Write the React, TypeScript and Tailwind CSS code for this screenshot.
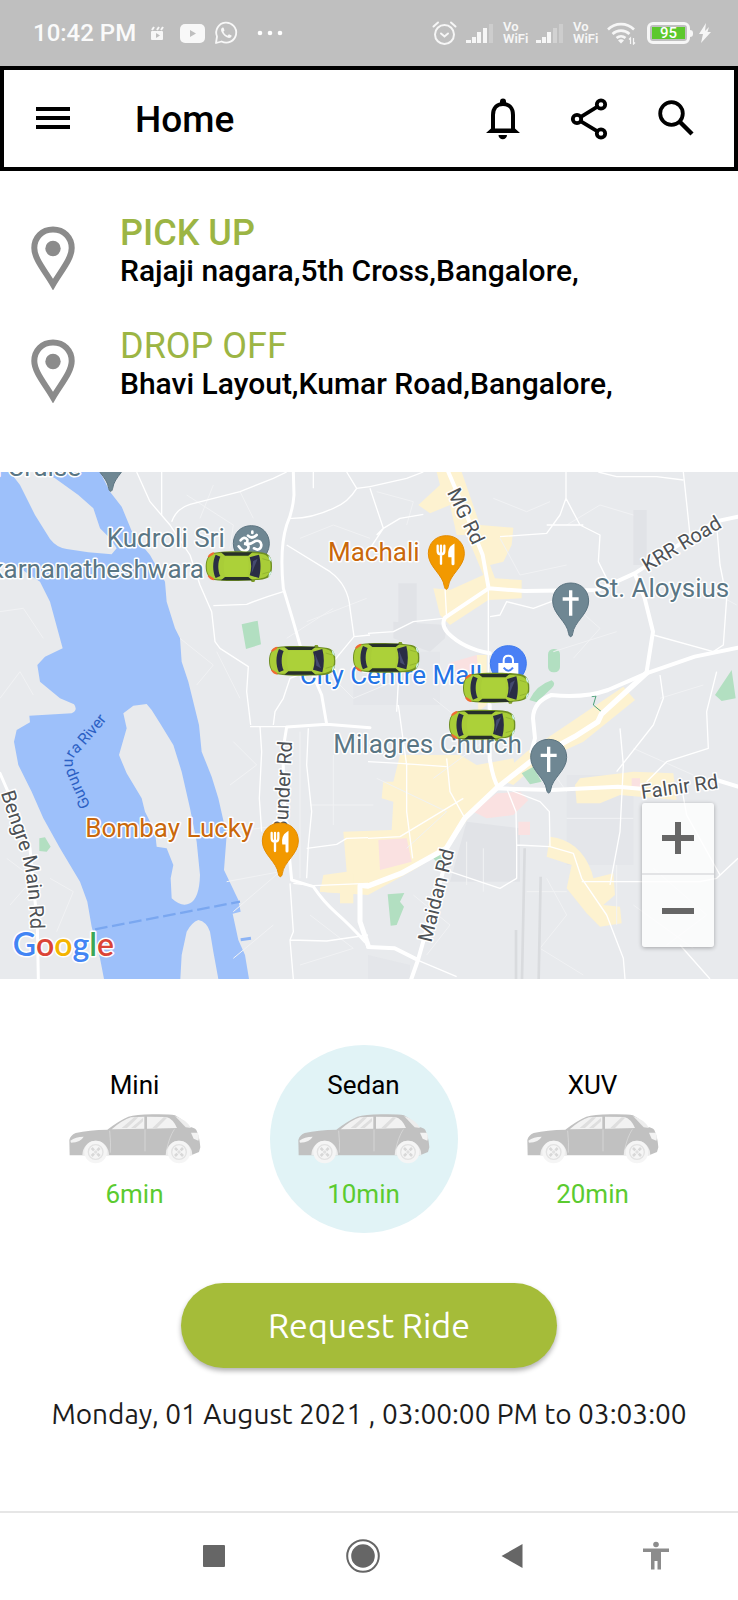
import { useState } from "react";
import type { ReactNode } from "react";

const ROBOTO = "font-['Roboto','Liberation_Sans',sans-serif]";

function SignalIcon({ dim }: { dim: number }) {
  return (
    <svg width="28" height="22" viewBox="0 0 28 22" fill="#f6f6f6" aria-hidden="true">
      <rect x="0" y="18" width="5" height="3" />
      <rect x="6" y="15" width="4" height="6" />
      <rect x="11" y="10" width="4" height="11" />
      <rect x="17" y="6" width="4" height="15" fillOpacity={dim > 1 ? 0.35 : 1} />
      <rect x="23" y="2" width="4" height="19" fillOpacity="0.25" />
    </svg>
  );
}

function VoWifi() {
  return (
    <span className="flex w-[26px] flex-col text-[13px] leading-[12px] font-semibold text-[#f6f6f6]">
      <span>Vo</span>
      <span>WiFi</span>
    </span>
  );
}

function StatusBar() {
  return (
    <div className="flex h-[66px] items-center justify-between bg-[#bfbfbf] pr-[26px] pl-[33px] text-white">
      <div className="flex items-center">
        <span className="w-[118px] text-[24px] leading-[28px] font-medium text-[#fafafa]">10:42 PM</span>
        <svg width="13" height="14" viewBox="0 0 13 14" aria-hidden="true">
          <path d="M1 4L3 1M6 4L8 1M10 4L12 1" stroke="#f7f7f7" strokeWidth="2" />
          <rect x="0" y="5" width="12" height="9" rx="1" fill="#f7f7f7" />
          <path d="M5 7L9 9.500L5 12Z" fill="#bfbfbf" />
        </svg>
        <svg className="ml-4" width="25" height="19" viewBox="0 0 25 19" aria-hidden="true">
          <rect width="25" height="19" rx="5" fill="#f8f8f8" />
          <path d="M10 6L16 9.500L10 13Z" fill="#bfbfbf" />
        </svg>
        <svg className="ml-[9px]" width="24" height="24" viewBox="0 0 24 24" aria-hidden="true">
          <path d="M2 22L3 15.500A10 10 0 1 1 7.600 20.500Z" fill="none" stroke="#f8f8f8" strokeWidth="1.800" strokeLinejoin="round" />
          <path d="M8.500 6.500C7 7.200 6.700 9 7.500 10.700C9 14 12 16.400 15 17C16.500 17 17.700 16 17.600 14.600L14.900 13.200L13.600 14.700C11.600 13.900 10.200 12.500 9.400 10.700L10.500 9.400L9.600 6.800Z" fill="#f8f8f8" />
        </svg>
        <svg className="ml-[19px]" width="26" height="6" viewBox="0 0 26 6" fill="#fff" aria-hidden="true">
          <circle cx="3" cy="3" r="2.300" />
          <circle cx="13" cy="3" r="2.300" />
          <circle cx="23" cy="3" r="2.300" />
        </svg>
      </div>
      <div className="flex items-center">
        <svg width="25" height="24" viewBox="0 0 25 24" fill="none" stroke="#f6f6f6" strokeWidth="2" strokeLinecap="round" aria-hidden="true">
          <circle cx="12.500" cy="13.500" r="9.500" />
          <path d="M1.500 5.500L6 1.500M23.500 5.500L19 1.500M9 12.500L12.500 15.500L16 12.500" />
        </svg>
        <span className="ml-[9px]"><SignalIcon dim={1} /></span>
        <span className="ml-[9px]"><VoWifi /></span>
        <span className="ml-[7px]"><SignalIcon dim={2} /></span>
        <span className="ml-[9px]"><VoWifi /></span>
        <svg className="ml-[8px]" width="30" height="24" viewBox="0 0 30 24" fill="none" stroke="#f6f6f6" strokeWidth="2.600" aria-hidden="true">
          <path d="M1 8.500A18.500 18.500 0 0 1 27 8.500M5.500 13A12.500 12.500 0 0 1 22.500 13M9.500 17A7 7 0 0 1 18.500 17" />
          <path d="M11 19.500A4 4 0 0 1 17 19.500L14 22.500Z" fill="#f6f6f6" stroke="none" />
          <path d="M23.500 23V17L22 18.500M26.500 17V23L28 21.500" strokeWidth="1.200" />
        </svg>
        <span className="ml-[10px] flex h-[22px] w-[43px] items-center justify-center rounded-[6px] border-[3px] border-[#f6f6f6] p-[2px]">
          <span className="flex h-[12px] w-full items-center justify-center bg-[#5cc82c] text-[15px] leading-[14px] font-medium text-white">95</span>
        </span>
        <span className="h-[7px] w-[3px] rounded-r-sm bg-[#f6f6f6]" />
        <svg className="ml-[5px]" width="14" height="22" viewBox="0 0 14 22" fill="#f6f6f6" aria-hidden="true">
          <path d="M8 1L1 12H5L3 21L13 10H9.500L11 5L7 9Z" />
        </svg>
      </div>
    </div>
  );
}

function Header() {
  return (
    <header className="flex h-[105px] items-center border-4 border-black bg-white px-8 text-black">
      <button type="button" aria-label="Open menu" className="shrink-0">
        <svg width="34" height="24" viewBox="0 0 34 24" fill="#000">
          <rect y="0" width="34" height="4" />
          <rect y="9" width="34" height="4" />
          <rect y="18" width="34" height="4" />
        </svg>
      </button>
      <h1 className="ml-[65px] flex-1 pt-[2px] text-[37px] leading-[44px] font-medium">Home</h1>
      <div className="flex items-center gap-[50px]">
        <button type="button" aria-label="Notifications">
          <svg width="34" height="42" viewBox="0 0 34 42">
            <path d="M7 32V17C7 10 11 6 17 6S27 10 27 17V32" fill="none" stroke="#000" strokeWidth="4" />
            <path d="M14 6V3.500A3 3 0 0 1 20 3.500V6ZM0 35L5 30.500H29L34 35ZM12.500 37H21A4.200 4.200 0 0 1 12.500 37Z" />
          </svg>
        </button>
        <button type="button" aria-label="Share">
          <svg width="38" height="42" viewBox="0 0 38 42" fill="none" stroke="#000" strokeWidth="3.800">
            <circle cx="7" cy="21" r="4.200" />
            <circle cx="31" cy="6.500" r="4.200" />
            <circle cx="31" cy="35.500" r="4.200" />
            <path d="M10.500 19L27.500 8.700M10.500 23L27.500 33.300" />
          </svg>
        </button>
        <button type="button" aria-label="Search" className="mr-[8px]">
          <svg width="36" height="40" viewBox="0 0 36 40" fill="none" stroke="#000" strokeWidth="3.800">
            <circle cx="13.500" cy="14.500" r="11.300" />
            <path d="M22 23L34 35" strokeWidth="4.400" />
          </svg>
        </button>
      </div>
    </header>
  );
}

function PlaceRow({ title, address, strong }: { title: string; address: string; strong?: boolean }) {
  return (
    <div className="flex h-[72px] items-start">
      <svg className="mt-[11px] shrink-0" width="44" height="64" viewBox="0 0 44 64" aria-hidden="true">
        <path d="M22 3.500C11 3.500 3.300 11.500 3.300 22C3.300 33 14.500 45.500 22 58.500C29.500 45.500 40.700 33 40.700 22C40.700 11.500 33 3.500 22 3.500Z" fill="none" stroke="#8b8b8b" strokeWidth="6" />
        <circle cx="22" cy="22.500" r="7.700" fill="#8b8b8b" />
      </svg>
      <div className="ml-[45px] flex flex-col">
        <h2 className={strong ? "text-[36px] leading-[36px] font-medium text-[#9cb544]" : "text-[36px] leading-[36px] font-normal text-[#9cb544]"}>{title}</h2>
        <p className="text-[30px] leading-[40px] font-medium text-black">{address}</p>
      </div>
    </div>
  );
}

function CabMarker({ x, y, flip }: { x: number; y: number; flip?: boolean }) {
  return (
    <g transform={`translate(${x} ${flip ? y + 94 : y}) scale(1 ${flip ? -1 : 1})`}>
      <path d="M134 8L138 0H146L150 8Z" fill="#7d9c2a" />
      <path d="M26 6C10 10 0 24 0 47S10 84 26 88C60 94 110 93 150 91C172 90 184 86 190 80C198 70 199 60 199 47S198 26 190 16C184 10 172 7 150 6C110 3 60 1 26 6Z" fill="#6f8f22" />
      <path d="M24 9C10 14 3 26 3 47S10 80 24 85C60 89 120 88 150 86C170 85 180 82 186 76C193 68 195 60 195 47S193 28 186 20C180 13 170 11 150 9C120 7 60 6 24 9Z" fill="#a9cd38" />
      <path d="M6 18C10 10 18 5 26 5L24 11L10 20ZM6 76C10 84 18 89 26 89L24 83L10 74Z" fill="#f06a32" />
      <path d="M188 14C195 20 198 28 197 34L190 26ZM188 80C195 74 198 66 197 60L190 68Z" fill="#c9efe8" />
      <path d="M46 5H140L128 15H58ZM46 89H140L128 79H58Z" fill="#27302a" />
      <path d="M30 12L44 18C36 34 36 60 44 76L30 82C20 62 20 32 30 12Z" fill="#2a2d45" />
      <path d="M132 20L160 12C166 34 166 60 160 82L132 74C138 56 138 38 132 20Z" fill="#2a2d45" />
      <path d="M138 26L156 70L142 62Z" fill="#454b70" />
      <path d="M58 18Q50 47 58 76H126Q132 47 126 18Z" fill="#acd139" />
      <path d="M170 24L190 30M170 70L190 64" stroke="#88a92c" strokeWidth="2" />
    </g>
  );
}

function MapPin({ x, y, fill, edge, children }: { x: number; y: number; fill: string; edge: string; children?: ReactNode }) {
  return (
    <g transform={`translate(${x} ${y})`}>
      <path d="M0 -106C-33 -106 -54 -82 -54 -52C-54 -12 -10 10 -6 46C-4 58 4 58 6 46C10 10 54 -12 54 -52C54 -82 33 -106 0 -106Z" fill={fill} stroke={edge} strokeWidth="3" />
      {children}
    </g>
  );
}

function Cutlery() {
  return (
    <g fill="none" stroke="#fff" strokeLinecap="round">
      <path d="M-26 -76V-60Q-26 -50 -16 -50Q-6 -50 -6 -60V-76M-16 -76V-22" strokeWidth="7" />
      <path d="M20 -22V-74Q8 -66 10 -46H18" strokeWidth="9" fill="#fff" />
    </g>
  );
}

function CrossGlyph() {
  return <path d="M0 -84V-8M-24 -58H24" fill="none" stroke="#fff" strokeWidth="10" />;
}

const HALO = { paintOrder: "stroke", stroke: "#fff", strokeWidth: 9, strokeLinejoin: "round" } as const;

function CityMap() {
  return (
    <svg className={`block h-auto w-full ${ROBOTO}`} viewBox="0 21 2214 1521" role="img" aria-label="Map of nearby cabs">
      <defs>
        <path id="river" d="M272 1022Q236 950 220 905Q212 880 240 858Q275 820 330 752" />
        <path id="bengre" d="M2 984Q40 1100 62 1160Q88 1240 92 1420" />
      </defs>
      <rect y="21" width="2214" height="1521" fill="#e8eaed" />
      <g fill="#e1e3e7">
        <path d="M1180 470L1340 480L1335 520L1290 560L1180 520ZM1195 355H1250V475H1195ZM1900 135H1940V300H1900ZM1400 1070L1560 1090V1250H1350Z" />
        <path d="M1104 1470L1230 1500V1541H1104ZM1060 560H1320V720H1060ZM1700 930H1900V1200H1700Z" opacity=".6" />
      </g>
      <path d="M0 21H300L330 80L365 125L400 210L450 270L495 350L500 410L525 490L540 520L545 590L565 650L597 780L605 860L635 935L655 1000L680 1110L672 1215L715 1305L722 1340L698 1346L715 1425L735 1470L747 1542H312L300 1480L275 1385L262 1310L240 1250L180 1150L130 1060L95 980L55 900L42 830L50 795L90 772L88 752L215 745Q235 735 222 718L180 700L120 650L112 600L135 575L188 550L150 410L120 350L60 310L0 290Z" fill="#9dc0fa" />
      <g fill="#e8eaed">
        <path d="M30 21L60 60L105 150L150 222Q170 248 200 252L265 262L335 268L350 250L330 220L300 190L280 130L235 90L165 40L130 21Z" />
        <path d="M370 745L400 722L440 717L455 735L480 775L520 840L545 920L570 1030L590 1130L600 1230Q598 1300 570 1315Q545 1328 515 1300L512 1240L520 1200L500 1150L470 1145L465 1100L435 1040L425 1000L380 925L357 870L380 790Z" />
        <path d="M541 1542L545 1470L560 1400Q575 1372 595 1365Q620 1370 630 1400L640 1460L655 1542Z" />
      </g>
      <path d="M285 1393L720 1310" stroke="#7aa7f0" strokeWidth="7" strokeDasharray="38 14" />
      <path d="M722 1424L753 1420" stroke="#8db4f5" strokeWidth="9" />

      <g fill="#fdf2d0">
        <path d="M1310 21H1385L1440 180L1540 188L1535 240L1510 290L1470 300L1485 340L1565 345V400L1465 405L1350 480L1320 450L1300 370L1350 375L1450 330L1400 210L1370 210L1350 120L1290 145L1255 120L1320 60Z" />
        <path d="M1430 570L1460 570V720L1435 740Z" />
        <path d="M1870 665L1905 705L1750 830L1620 890L1540 960L1490 940L1580 860L1700 780Z" />
        <path d="M1200 870H1380L1430 900L1540 880L1550 930L1440 1010L1340 1150L1250 1210L1104 1290L960 1280L970 1230L1040 1220L1030 1100L1175 1095L1180 1010L1145 1000L1150 950L1180 950Z" />
        <path d="M960 1265L1060 1225V1315H1020V1285L960 1280Z" />
        <path d="M1725 960L1740 940L1900 920L2020 925L2030 1005L1860 990L1800 1015L1730 1015Z" />
        <path d="M1650 1115Q1740 1125 1775 1220L1780 1240L1840 1225L1845 1290L1810 1320L1860 1325L1865 1375L1800 1385L1760 1345L1700 1270L1715 1200L1640 1175Z" />
      </g>
      <g fill="#fae1e1">
        <path d="M1420 1040L1490 985L1560 980L1585 1005L1540 1050L1460 1060ZM1555 1070H1590V1110H1555ZM1135 1125L1220 1120L1235 1190L1140 1215ZM1345 595L1430 570L1435 620H1360ZM1895 940H1920V965H1895Z" />
      </g>
      <g fill="#b2dfc1">
        <path d="M725 478L773 467L783 538L738 552ZM118 1120L135 1117L152 1145L140 1160L118 1158Z" />
        <rect x="1644" y="552" width="36" height="70" rx="16" />
        <path d="M1588 705Q1610 660 1655 646Q1670 655 1655 670L1610 712ZM2145 690L2195 615L2207 700L2165 708ZM1565 925L1600 905L1625 950L1590 958ZM1163 1288L1213 1284L1200 1310L1212 1325L1190 1380L1172 1382ZM1290 1170L1330 1155L1325 1205Z" />
      </g>
      <path d="M1775 695L1788 693L1780 720L1804 740" fill="none" stroke="#4ba279" strokeWidth="3" />

      <g fill="none" stroke="#f1f2f4" strokeWidth="3">
        <path d="M560 90L700 180L690 250M640 60L600 160M720 80L760 160M540 520L640 600L590 660M650 560L720 700M900 220L1000 180L1110 220M920 470L1100 400M860 520L1000 430M980 620L1060 700L1180 650M0 440L70 430L130 520M0 700L60 620L100 690M700 830L770 900L690 960M700 1100L850 1080M680 1250L840 1220L700 1340M820 1380L700 1480M900 800V1240M1000 870V1080M20 1180L100 1240L30 1320M150 1240L220 1280L170 1400M930 1020H1120M930 1350L1060 1450L900 1500" />
        <path d="M1130 80L1240 110L1220 180M1480 100L1580 140L1650 110M1700 180L1800 120L1900 150M1500 220L1560 330L1700 300M1720 420L1800 490L1720 580M1660 560L1850 500M1980 380L2100 360L2210 420M1980 700L2110 660M1300 700L1400 780M1450 830L1300 940M1130 940L1340 1040L1220 1150M1600 840L1700 980M1900 850L2080 930M1400 1130V1260M1450 1150V1280M1640 1240L1700 1350L1620 1450L1750 1530M1580 1280H1700M1850 1200V1380M1900 1320L2080 1450M1960 1210L2120 1350L2000 1440M1240 1290L1350 1380L1280 1470M1700 1060H1900" />
      </g>
      <g fill="none" stroke="#fff" strokeWidth="4" strokeLinejoin="round">
        <path d="M410 21L450 110L510 180L570 270L600 360L635 440L645 530L660 550L745 605L740 680L752 780M485 21V150M515 170Q530 130 570 118L720 80L820 40L860 21M870 160Q930 162 1000 130Q1045 112 1070 70L1110 65M940 21V70M850 380Q790 398 740 418L640 422M1070 70L1040 21M860 240L990 320Q1045 360 1050 430L1062 515L1110 510M1062 515L1000 590L870 640L850 700L825 740L820 780M780 785L785 860L778 1000L785 1100M925 790L920 900L935 1040L925 1140L920 1240M750 785H860M920 1150L1010 1138L1040 1120L1104 1118M870 1255L880 1400L870 1425L880 1542M870 1425L980 1428L1104 1410M880 1255L940 1262L1104 1255" />
        <path d="M1110 65L1220 40L1270 21M1110 70L1150 190L1130 210M1110 250L1150 190L1200 160L1270 148M1698 21V100L1680 150L1640 205L1500 215M1698 100L1740 180L1800 210L1795 290L1820 340M1640 180H1750M1795 21L1850 35H1970L2050 45M2050 21L2070 210M2150 180L2160 300L2180 400L2170 540L2140 560L1960 510M1335 370L1340 460M1465 375V720M1330 460L1240 470L1180 500L1104 505M1470 455L1500 450L1520 410L1600 430L1680 400M1980 630L1990 700L1960 780L1850 920M2150 620L2120 740L2125 850L2000 890L1940 950M1860 790L1870 900L1860 1100L1830 1260M1195 720L1210 830L1220 900V1040L1238 1180M1190 740L1195 650M1340 880L1350 980L1395 1060M1520 970L1548 1040L1550 1140L1650 1145L1648 1040L1620 1010L1530 975M1550 1140V1240L1500 1270L1350 1220M1650 1145L1720 1165L1745 1240L1820 1350L1870 1480L1875 1542M1745 1250H2100L2150 1240L2214 1180M2040 940L2060 1050L2160 1230M2040 1440L2130 1542M1104 890L1200 895L1340 905M1240 1480L1370 1535M1104 1120L1200 1115L1390 1000" />
      </g>
      <g fill="none" stroke="#fff" strokeWidth="12" strokeLinejoin="round" strokeLinecap="round">
        <path d="M880 21L882 90Q878 140 860 180Q838 250 850 370L880 470L900 540L965 690L980 778L860 786L848 860L855 1040L875 1245L940 1265Q970 1310 1010 1345T1095 1430M980 778L1110 788M0 925L50 1040L90 1150L112 1380L115 1542" strokeWidth="9" />
        <path d="M1080 1262V1370L1104 1440" strokeWidth="15" />
        <path d="M1345 21L1400 150L1448 270L1466 370L1335 458Q1322 480 1345 505Q1390 550 1469 565M1466 370L1574 378L1794 375L1904 325L2144 170L2214 155M1904 325L1934 400L1959 500L1940 620M2214 548L2084 575L1939 625L1824 675Q1754 700 1654 690Q1600 710 1599 760L1605 820L1594 860M1469 720V880Q1478 940 1495 968M1489 970L1654 975L1854 965L1930 972M2140 942L2214 965M1104 1446L1184 1450L1254 1485M1339 1150L1329 1220L1254 1485L1234 1542" />
        <path d="M1939 625L1804 748L1794 770L1724 815L1604 880L1489 970L1394 1060L1339 1150L1204 1225L1104 1263L1090 1262" strokeWidth="16" />
      </g>
      <path d="M1574 1150L1566 1542M1622 1235L1616 1542M1548 1395V1542" stroke="#d9dbde" strokeWidth="8" />

      <g fontSize="60" fill="#4d5155" style={{ ...HALO }}>
        <text transform="translate(1340 82) rotate(64)">MG Rd</text>
        <text transform="translate(1942 322) rotate(-31)">KRR Road</text>
        <text transform="translate(1926 1002) rotate(-8)">Falnir Rd</text>
        <text transform="translate(1294 1434) rotate(-76)">Maidan Rd</text>
        <text transform="translate(862 1104) rotate(-87)">Bunder Rd</text>
        <text><textPath href="#bengre">Bengre Main Rd</textPath></text>
      </g>
      <text fontSize="47" fill="#2b5fc4"><textPath href="#river">Gurupura River</textPath></text>

      <MapPin x={332} y={24} fill="#6f8793" edge="#5b7380" />
      <MapPin x={754} y={288} fill="#6f8793" edge="#5b7380">
        <path d="M-32 -62Q-22 -76 -12 -64Q-10 -52 -22 -52Q-4 -50 -10 -36Q-24 -22 -38 -44M-14 -50Q2 -52 12 -60Q28 -64 30 -48Q30 -36 18 -34L8 -38M-10 -76Q2 -64 16 -78M3 -84V-88" fill="none" stroke="#fff" strokeWidth="8" strokeLinecap="round" />
      </MapPin>
      <MapPin x={1339} y={318} fill="#f29900" edge="#e48b00"><Cutlery /></MapPin>
      <MapPin x={841} y={1180} fill="#f29900" edge="#e48b00"><Cutlery /></MapPin>
      <MapPin x={1712} y={460} fill="#6f8793" edge="#5b7380"><CrossGlyph /></MapPin>
      <MapPin x={1646} y={929} fill="#6f8793" edge="#5b7380"><CrossGlyph /></MapPin>
      <MapPin x={1525} y={648} fill="#4a80f5" edge="#3b78ee">
        <path d="M-30 -54H30V-10H-30Z" fill="#fff" />
        <path d="M-14 -54V-62Q-14 -76 0 -76T14 -62V-54" fill="none" stroke="#fff" strokeWidth="6" />
        <path d="M-14 -40Q0 -22 14 -40" fill="none" stroke="#4a80f5" strokeWidth="6" />
      </MapPin>

      <g fontSize="78" style={{ ...HALO }}>
        <g fill="#5a7684">
          <text x="243" y="33" textAnchor="end">n Cruise</text>
          <text x="320" y="247">Kudroli Sri</text>
          <text x="612" y="340" textAnchor="end">karnanatheshwara</text>
          <text x="1783" y="395">St. Aloysius</text>
          <text x="1000" y="864">Milagres Church</text>
        </g>
        <text x="984" y="289" fill="#c9680c">Machali</text>
        <text x="256" y="1117" fill="#c9680c">Bombay Lucky</text>
        <text x="899" y="656" fill="#2474e5">City Centre Mall</text>
      </g>
      <text x="38" y="1474" fontSize="96" className="font-['Lato','Roboto',sans-serif] font-semibold" style={{ ...HALO }}>
        <tspan fill="#4285f4">G</tspan>
        <tspan fill="#db4437">o</tspan>
        <tspan fill="#f4b400">o</tspan>
        <tspan fill="#4285f4">g</tspan>
        <tspan fill="#3aa757">l</tspan>
        <tspan fill="#db4437">e</tspan>
      </text>

      <CabMarker x={617} y={257} flip />
      <CabMarker x={807} y={540} />
      <CabMarker x={1059} y={531} />
      <CabMarker x={1389} y={622} flip />
      <CabMarker x={1347} y={733} flip />
    </svg>
  );
}

function HatchbackDrawing() {
  return (
    <svg width="132" height="50" viewBox="0 0 396 150" aria-hidden="true">
      <path d="M2 125L1 78Q4 64 20 57Q60 48 115 47Q150 20 178 8Q200 2 250 1Q300 0 318 4Q350 22 360 39Q376 40 382 48Q392 70 394 100L390 114L366 124H2Z" fill="#c1c1c1" />
      <path d="M128 46Q160 18 186 10L226 8V44ZM234 8L292 9Q312 14 324 42L234 44Z" fill="#f2f2f2" />
      <path d="M158 42L196 10H208L174 42ZM186 42L222 12V22L200 42ZM250 42L284 10H296L264 42Z" fill="#dedede" />
      <path d="M318 6L350 40L366 42Q354 18 318 6Z" fill="#ededed" />
      <path d="M4 80Q20 68 44 68Q36 84 6 86ZM366 56L386 56Q392 66 388 80L374 74Z" fill="#f3f3f3" />
      <path d="M228 46V112M122 50Q126 90 124 116M316 46Q300 70 292 112" fill="none" stroke="#d8d8d8" strokeWidth="2.500" />
      {[80, 330].map((cx) => (
        <g key={cx}>
          <path d={`M${cx - 40} 124A40 44 0 0 1 ${cx + 40} 124Z`} fill="#ececec" />
          <circle cx={cx} cy="114" r="34" fill="#f5f5f5" />
          <circle cx={cx} cy="114" r="22" fill="none" stroke="#e2e2e2" strokeWidth="4" />
          <path d={`M${cx - 12} 102L${cx - 5} 109M${cx + 12} 102L${cx + 5} 109M${cx - 12} 126L${cx - 5} 119M${cx + 12} 126L${cx + 5} 119`} stroke="#d8d8d8" strokeWidth="8" />
          <circle cx={cx} cy="114" r="5" fill="#e0e0e0" />
        </g>
      ))}
    </svg>
  );
}

const CABS = [
  { name: "Mini", eta: "6min" },
  { name: "Sedan", eta: "10min" },
  { name: "XUV", eta: "20min" },
];

function CabPicker() {
  const [selected, setSelected] = useState("Sedan");
  return (
    <div className="mt-[66px] grid grid-cols-3 pr-[31px] pl-5">
      {CABS.map((cab) => (
        <button
          key={cab.name}
          type="button"
          aria-pressed={cab.name === selected}
          onClick={() => setSelected(cab.name)}
          className={
            cab.name === selected
              ? "mx-auto flex size-[188px] flex-col items-center rounded-full bg-[#e1f3f6] pt-[22px]"
              : "mx-auto flex size-[188px] flex-col items-center rounded-full pt-[22px]"
          }
        >
          <span className="text-[26px] leading-[36px] text-black">{cab.name}</span>
          <span className="mt-[11px]"><HatchbackDrawing /></span>
          <span className="mt-3 text-[26px] leading-[36px] text-[#5bcb30]">{cab.eta}</span>
        </button>
      ))}
    </div>
  );
}

function SystemNav() {
  return (
    <nav className="mt-auto flex h-[89px] items-center justify-between border-t-2 border-[#e6e6e6] bg-white pr-[69px] pb-[2px] pl-[203px]">
      <button type="button" aria-label="Recent apps">
        <svg width="22" height="22"><rect width="22" height="22" rx="1" fill="#666" /></svg>
      </button>
      <button type="button" aria-label="Home screen">
        <svg width="36" height="36" viewBox="0 0 36 36">
          <circle cx="18" cy="18" r="15.800" fill="none" stroke="#666" strokeWidth="2" />
          <circle cx="18" cy="18" r="11.800" fill="#666" />
        </svg>
      </button>
      <button type="button" aria-label="Back">
        <svg width="22" height="26" viewBox="0 0 22 26"><path d="M21.500 1V25L0.500 13Z" fill="#666" /></svg>
      </button>
      <button type="button" aria-label="Accessibility">
        <svg width="26" height="30" viewBox="0 0 26 30" fill="#8c8c8c">
          <circle cx="13" cy="3.500" r="2.800" />
          <path d="M0 7.500H26V11H18V28.500H14.500V20H11.500V28.500H8V11H0Z" />
        </svg>
      </button>
    </nav>
  );
}

export default function App() {
  return (
    <div className={`flex min-h-screen flex-col bg-white ${ROBOTO}`}>
      <StatusBar />
      <Header />
      <main>
        <section className="flex flex-col gap-[41px] pt-[44px] pl-[31px]">
          <PlaceRow title="PICK UP" address="Rajaji nagara,5th Cross,Bangalore," strong />
          <PlaceRow title="DROP OFF" address="Bhavi Layout,Kumar Road,Bangalore," />
        </section>
        <section className="relative mt-[72px]">
          <CityMap />
          <div className="absolute right-6 bottom-8 flex w-[72px] flex-col divide-y-2 divide-[#e3e4e6] rounded-[3px] bg-white/80 shadow-[0_1px_4px_rgba(0,0,0,0.3)]">
            <button type="button" aria-label="Zoom in" className="flex h-[72px] items-center justify-center">
              <svg width="32" height="32"><path d="M16 0V32M0 16H32" stroke="#666" strokeWidth="6" /></svg>
            </button>
            <button type="button" aria-label="Zoom out" className="flex h-[72px] items-center justify-center">
              <svg width="32" height="32"><path d="M0 16H32" stroke="#666" strokeWidth="6" /></svg>
            </button>
          </div>
        </section>
        <CabPicker />
        <div className="mt-[50px] flex flex-col items-center font-['Ubuntu','Noto_Sans',sans-serif]">
          <button type="button" className="h-[85px] w-[376px] rounded-full bg-[#a5bc39] pb-[2px] text-[34px] leading-[44px] text-white shadow-[0_3px_5px_rgba(0,0,0,0.3)]">
            Request Ride
          </button>
          <p className="mt-[26px] mb-8 text-center text-[28px] leading-[40px] text-[#1c1c1c]">Monday, 01 August 2021 , 03:00:00 PM to 03:03:00</p>
        </div>
      </main>
      <SystemNav />
    </div>
  );
}
